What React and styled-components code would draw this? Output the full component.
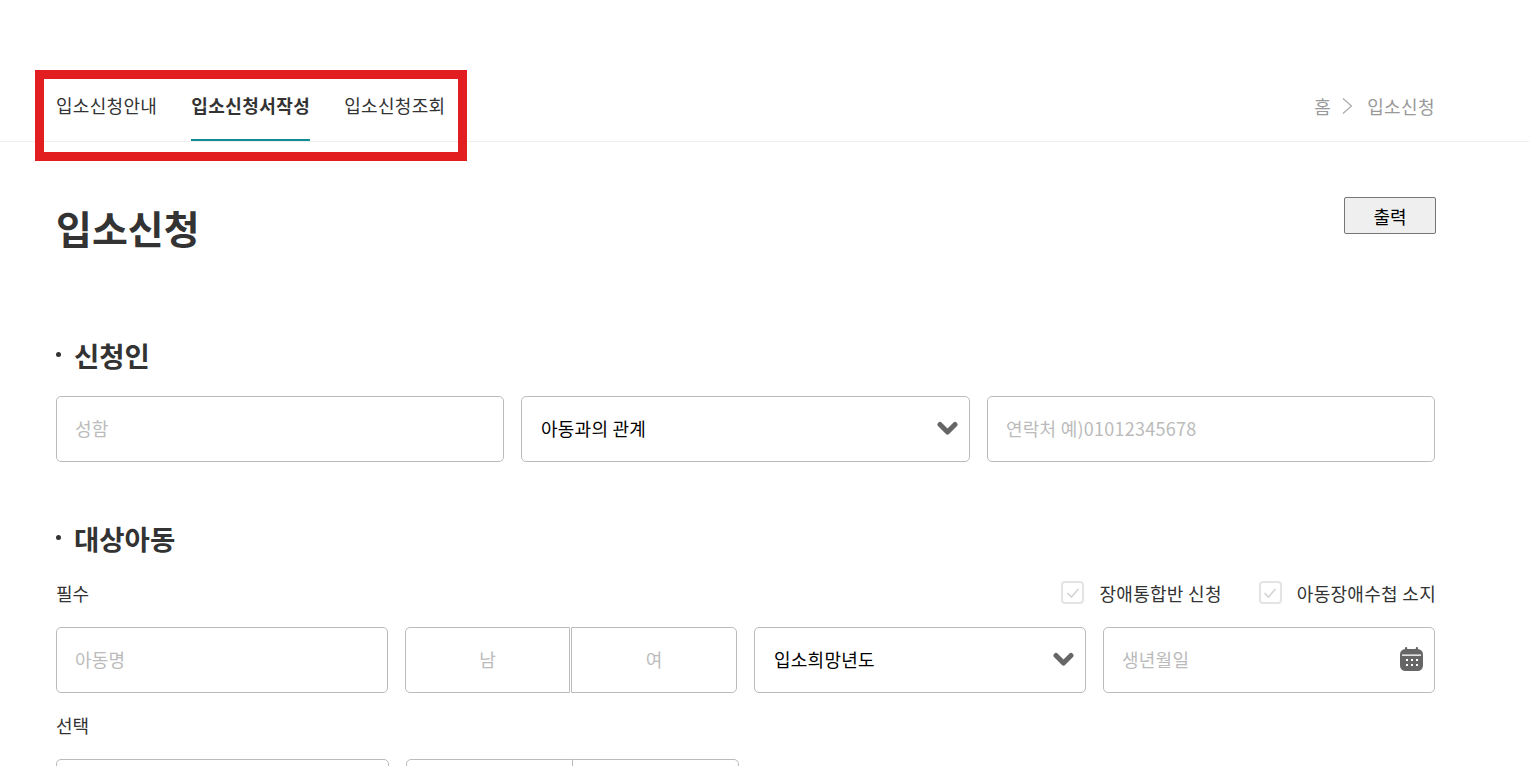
import React from 'react'
import styled, { createGlobalStyle } from 'styled-components'

const GlobalStyle = createGlobalStyle`
  html, body { margin: 0; padding: 0; background: #fff; }
  body {
    font-family: "Noto Sans CJK KR", "Noto Sans", sans-serif;
    color: #333;
  }
  * { box-sizing: border-box; }
`

const Page = styled.div`
  position: relative;
  height: 766px;
  overflow: hidden;
`

const TopBar = styled.header`
  margin-top: 70px;
  height: 72px;
  padding: 0 94px 0 56px;
  display: flex;
  justify-content: space-between;
  border-bottom: 1px solid #eee;
`

const Tabs = styled.nav`
  display: flex;
  gap: 34px;
`

const Tab = styled.a`
  height: 71px;
  display: flex;
  align-items: center;
  font-size: 18px;
  letter-spacing: ${p => (p.$active ? 0.45 : 0.3)}px;
  font-weight: ${p => (p.$active ? 700 : 400)};
  color: #333;
  border-bottom: 2px solid ${p => (p.$active ? '#0f8c94' : 'transparent')};
`

const Crumbs = styled.div`
  display: flex;
  align-items: center;
  gap: 11px;
  font-size: 18px;
  letter-spacing: 0.4px;
  color: #999;
`

const Highlight = styled.div`
  position: absolute;
  left: 35px;
  top: 70px;
  width: 432px;
  height: 91px;
  border: 9px solid #e31e20;
  pointer-events: none;
`

const Content = styled.main`
  padding: 0 94px 0 56px;
`

const TitleRow = styled.div`
  display: flex;
  justify-content: space-between;
  align-items: flex-start;
  padding-top: 55px;
  height: 194px;
`

const Title = styled.h1`
  margin: -2px 0 0;
  font-size: 39px;
  line-height: 64px;
  font-weight: 700;
  color: #333;
`

const PrintButton = styled.button`
  width: 92px;
  height: 37px;
  margin-right: -1px;
  padding: 0;
  border: 1px solid #767676;
  border-radius: 2px;
  background: #efefef;
  color: #000;
  font-family: inherit;
  font-size: 18px;
`

const Section = styled.section`
  margin-bottom: ${p => p.$gap || 0}px;
`

const SectionTitle = styled.h2`
  margin: 0 0 ${p => p.$gap}px;
  display: flex;
  align-items: center;
  gap: 13px;
  height: 38px;
  font-size: 27.5px;
  font-weight: 700;
  color: #333;
  &::before {
    content: '';
    width: 5px;
    height: 5px;
    border-radius: 50%;
    background: #333;
    margin-top: -1px;
  }
`

const FieldRow = styled.div`
  display: grid;
  grid-template-columns: ${p => p.$columns};
  column-gap: 17px;
`

const Field = styled.div`
  height: 66px;
  padding: 0 18px 2px ${p => (p.$filled ? 19 : 18)}px;
  display: flex;
  align-items: center;
  justify-content: space-between;
  border: 1px solid #bbb;
  border-radius: 5px;
  background: #fff;
  font-size: 18px;
  letter-spacing: 0.25px;
  color: ${p => (p.$filled ? '#000' : '#bbb')};
`

const Toggle = styled.div`
  display: flex;
`

const ToggleOption = styled.div`
  height: 66px;
  padding-bottom: 2px;
  display: flex;
  align-items: center;
  justify-content: center;
  border: 1px solid #bbb;
  font-size: 18px;
  color: #bbb;
  &:first-child {
    flex: 0 0 ${p => p.$width}px;
    border-radius: 5px 0 0 5px;
  }
  &:last-child {
    flex: 1;
    border-radius: 0 5px 5px 0;
    margin-left: ${p => p.$overlap || 0}px;
  }
`

const LabelRow = styled.div`
  height: 35px;
  margin: 0 0 17px;
  display: flex;
  justify-content: space-between;
  align-items: center;
`

const Label = styled.div`
  font-size: 18px;
  color: #333;
`

const Checks = styled.div`
  display: flex;
  gap: 37px;
  margin-right: -1px;
`

const Check = styled.label`
  display: flex;
  align-items: center;
  gap: 15px;
  font-size: 18px;
  letter-spacing: 0.3px;
  color: #333;
`

const CheckBox = styled.span`
  width: 23px;
  height: 23px;
  display: flex;
  align-items: center;
  justify-content: center;
  border: 2px solid #e4e4e4;
  border-radius: 4px;
`

const ChoiceLabel = styled(Label)`
  margin: 16px 0 18px;
  height: 32px;
  line-height: 32px;
`

const ChevronSvg = styled.svg`
  margin-right: -7px;
  flex: none;
`

function Chevron() {
  return (
    <ChevronSvg width="21" height="15" viewBox="0 0 21 15" fill="none">
      <path d="M3 3.5 10.5 11 18 3.5" stroke="#666" strokeWidth="5" strokeLinejoin="round" strokeLinecap="round" />
    </ChevronSvg>
  )
}

function CheckIcon() {
  return (
    <svg width="14" height="12" viewBox="0 0 14 12" fill="none">
      <path d="M1.5 6 5.5 10 12.5 2" stroke="#d4d4d4" strokeWidth="1.6" />
    </svg>
  )
}

const CalendarSvg = styled.svg`
  margin-right: -7px;
  flex: none;
`

function CalendarIcon() {
  const dots = [7, 12, 17]
  return (
    <CalendarSvg width="23" height="24" viewBox="0 0 23 24">
      <rect x="5" y="0" width="2.2" height="5" rx="1" fill="#666" />
      <rect x="15.8" y="0" width="2.2" height="5" rx="1" fill="#666" />
      <rect x="0" y="2" width="23" height="22" rx="5.5" fill="#666" />
      <rect x="2" y="7.5" width="19" height="1.3" fill="#fff" />
      {dots.map(x => <rect key={x} x={x - 1} y="12" width="2" height="2" fill="#fff" />)}
      {dots.map(x => <rect key={x} x={x - 1} y="17" width="2" height="2" fill="#fff" />)}
    </CalendarSvg>
  )
}

const ArrowSvg = styled.svg`
  margin-right: 3px;
`

function CrumbArrow() {
  return (
    <ArrowSvg width="11" height="18" viewBox="0 0 11 18" fill="none">
      <path d="M1 1.5 9.5 9 1 16.5" stroke="#aaa" strokeWidth="1.2" />
    </ArrowSvg>
  )
}

export default function App() {
  return (
    <Page>
      <GlobalStyle />
      <TopBar>
        <Tabs>
          <Tab>입소신청안내</Tab>
          <Tab $active>입소신청서작성</Tab>
          <Tab>입소신청조회</Tab>
        </Tabs>
        <Crumbs>
          <span>홈</span>
          <CrumbArrow />
          <span>입소신청</span>
        </Crumbs>
      </TopBar>
      <Highlight />

      <Content>
        <TitleRow>
          <Title>입소신청</Title>
          <PrintButton>출력</PrintButton>
        </TitleRow>

        <Section $gap={57}>
          <SectionTitle $gap={22}>신청인</SectionTitle>
          <FieldRow $columns="448px 449px 448px">
            <Field>성함</Field>
            <Field $filled>아동과의 관계<Chevron /></Field>
            <Field>연락처 예)01012345678</Field>
          </FieldRow>
        </Section>

        <Section>
          <SectionTitle $gap={18}>대상아동</SectionTitle>
          <LabelRow>
            <Label>필수</Label>
            <Checks>
              <Check><CheckBox><CheckIcon /></CheckBox>장애통합반 신청</Check>
              <Check><CheckBox><CheckIcon /></CheckBox>아동장애수첩 소지</Check>
            </Checks>
          </LabelRow>
          <FieldRow $columns="332px 332px 332px 332px">
            <Field>아동명</Field>
            <Toggle>
              <ToggleOption $width={165}>남</ToggleOption>
              <ToggleOption $overlap={1}>여</ToggleOption>
            </Toggle>
            <Field $filled>입소희망년도<Chevron /></Field>
            <Field>생년월일<CalendarIcon /></Field>
          </FieldRow>
          <ChoiceLabel>선택</ChoiceLabel>
          <FieldRow $columns="333px 333px">
            <Field />
            <Toggle>
              <ToggleOption $width={167} />
              <ToggleOption $overlap={-1} />
            </Toggle>
          </FieldRow>
        </Section>
      </Content>
    </Page>
  )
}
